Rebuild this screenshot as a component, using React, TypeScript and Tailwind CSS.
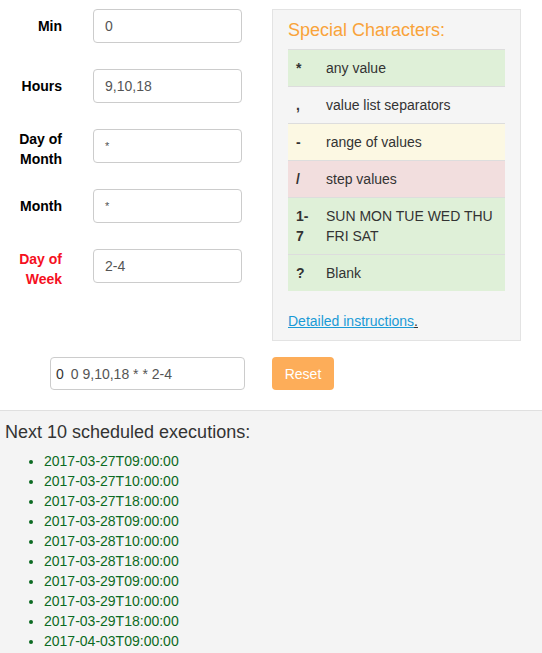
import React from "react";

const fields = [
  { label: ["Min"], value: "0", red: false },
  { label: ["Hours"], value: "9,10,18", red: false },
  { label: ["Day of", "Month"], value: "*", red: false },
  { label: ["Month"], value: "*", red: false },
  { label: ["Day of", "Week"], value: "2-4", red: true },
];

const specials = [
  { ch: "*", text: "any value", bg: "bg-[#dff0d8]" },
  { ch: ",", text: "value list separators", bg: "bg-transparent" },
  { ch: "-", text: "range of values", bg: "bg-[#fcf8e3]" },
  { ch: "/", text: "step values", bg: "bg-[#f2dede]" },
  { ch: "1-7", text: "SUN MON TUE WED THU FRI SAT", bg: "bg-[#dff0d8]" },
  { ch: "?", text: "Blank", bg: "bg-[#dff0d8]" },
];

const runs = [
  "2017-03-27T09:00:00",
  "2017-03-27T10:00:00",
  "2017-03-27T18:00:00",
  "2017-03-28T09:00:00",
  "2017-03-28T10:00:00",
  "2017-03-28T18:00:00",
  "2017-03-29T09:00:00",
  "2017-03-29T10:00:00",
  "2017-03-29T18:00:00",
  "2017-04-03T09:00:00",
];

const App: React.FC = () => {
  return (
    <div className="flex min-h-screen flex-col bg-white font-['Liberation_Sans',Arial,sans-serif] text-[14px] leading-[20px] text-[#333]">
      <div className="pt-[9px]">
        <div className="flex">
          {/* Fields */}
          <div className="flex flex-col gap-[26px]">
            {fields.map((f) => (
              <div key={f.label.join(" ")} className="flex h-[34px] items-center">
                <div
                  className={`w-[62px] text-right font-bold ${
                    f.red ? "text-[#f5101e]" : "text-black"
                  } ${f.label.length > 1 ? "mt-[5px]" : ""}`}
                >
                  {f.label.map((l) => (
                    <div key={l}>{l}</div>
                  ))}
                </div>
                <div className="ml-[31px] flex h-[34px] w-[149px] items-center rounded-[4px] border border-[#ccc] bg-white px-[11px] text-[#555]">
                  {f.value === "*" ? (
                    <span className="text-[11px]">*</span>
                  ) : (
                    f.value
                  )}
                </div>
              </div>
            ))}
          </div>

          {/* Special characters panel */}
          <div className="ml-[30px] w-[249px] border border-[#e3e3e3] bg-[#f5f5f5] px-[15px] pt-[10px] pb-[9px]">
            <h4 className="mb-[9px] text-[18px] leading-[20px] text-[#f9a33a]">
              Special Characters:
            </h4>
            <table className="w-full border-collapse">
              <tbody>
                {specials.map((s) => (
                  <tr key={s.ch} className={`${s.bg} border-t border-[#ddd]`}>
                    <td className="w-[30px] px-[8px] py-[8px] align-top font-bold break-all">
                      {s.ch}
                    </td>
                    <td className="py-[8px] pr-[8px] pl-[8px] align-top">{s.text}</td>
                  </tr>
                ))}
              </tbody>
            </table>
            <p className="mt-[20px]">
              <a href="#" className="text-[#1a9ad6] underline">
                Detailed instructions
              </a>
              <span className="underline">.</span>
            </p>
          </div>
        </div>

        {/* Expression + reset */}
        <div className="mt-[16px] flex items-center">
          <div className="ml-[50px] flex h-[33px] w-[195px] items-center rounded-[4px] border border-[#ccc] bg-white px-[5px] text-[#555]">
            <span className="text-[#333]">0</span>
            <span className="ml-[7px]">0 9,10,18 * * 2-4</span>
          </div>
          <button className="ml-[27px] h-[33px] w-[62px] rounded-[4px] bg-[#fdad59] text-white">
            Reset
          </button>
        </div>
      </div>

      {/* Next executions */}
      <div className="mt-[20px] flex-1 border-t border-[#e0e0e0] bg-[#f4f4f4] px-[5px]">
        <h4 className="mt-[11px] mb-[9px] text-[18px] leading-[20px] text-[#333]">
          Next 10 scheduled executions:
        </h4>
        <ul className="list-disc pl-[39px] text-[#0b6a22] marker:text-[#0b6a22]">
          {runs.map((r) => (
            <li key={r}>{r}</li>
          ))}
        </ul>
      </div>
    </div>
  );
};

export default App;
